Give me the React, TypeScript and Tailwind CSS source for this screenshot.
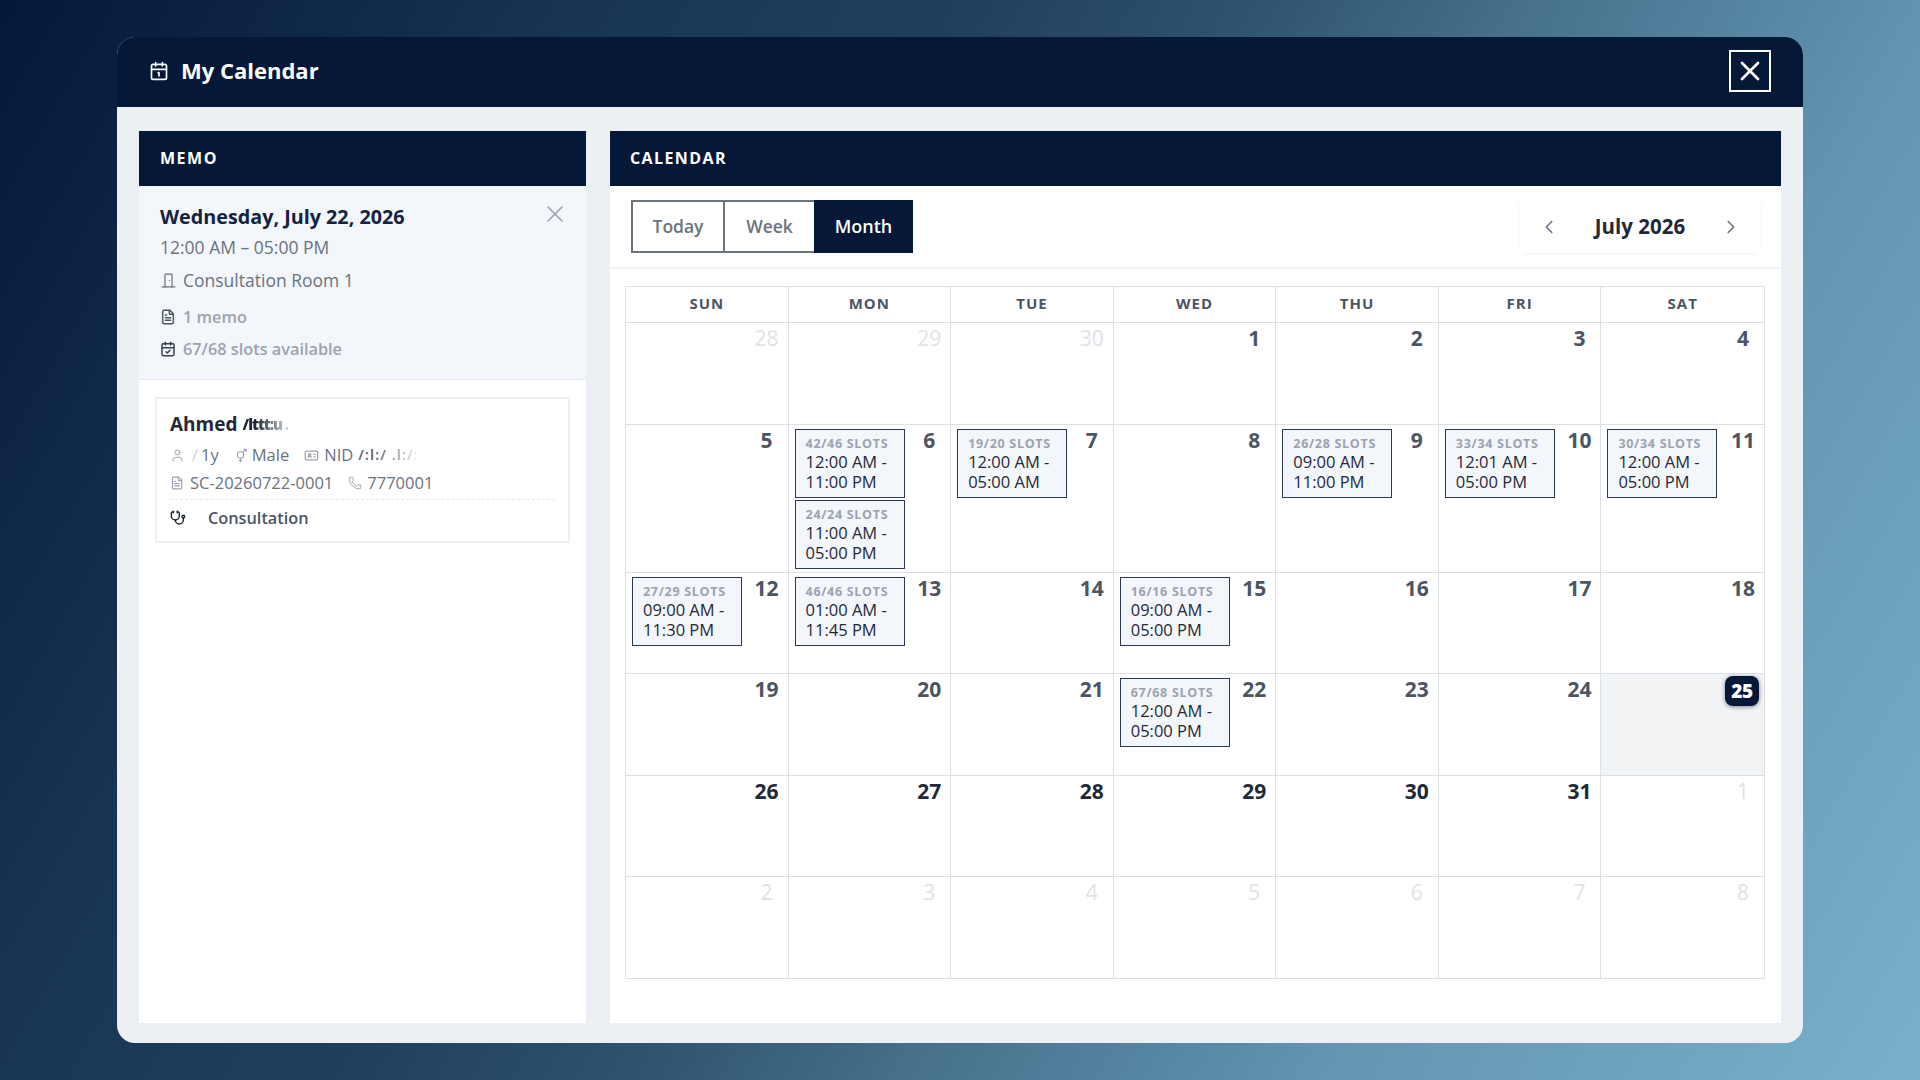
import React from 'react';
import { Stethoscope, X, ChevronLeft, ChevronRight, User, IdCard, Phone, FileText, CalendarCheck, VenusAndMars, Calendar1 } from 'lucide-react';

type Slot = { count: string; from: string; to: string };
type Day = { n: number; muted?: boolean; strong?: boolean; today?: boolean; slots?: Slot[] };

const heads = ['SUN', 'MON', 'TUE', 'WED', 'THU', 'FRI', 'SAT'];

const weeks: Day[][] = [
  [{ n: 28, muted: true }, { n: 29, muted: true }, { n: 30, muted: true }, { n: 1 }, { n: 2 }, { n: 3 }, { n: 4 }],
  [
    { n: 5 },
    { n: 6, slots: [{ count: '42/46', from: '12:00 AM', to: '11:00 PM' }, { count: '24/24', from: '11:00 AM', to: '05:00 PM' }] },
    { n: 7, slots: [{ count: '19/20', from: '12:00 AM', to: '05:00 AM' }] },
    { n: 8 },
    { n: 9, slots: [{ count: '26/28', from: '09:00 AM', to: '11:00 PM' }] },
    { n: 10, slots: [{ count: '33/34', from: '12:01 AM', to: '05:00 PM' }] },
    { n: 11, slots: [{ count: '30/34', from: '12:00 AM', to: '05:00 PM' }] },
  ],
  [
    { n: 12, slots: [{ count: '27/29', from: '09:00 AM', to: '11:30 PM' }] },
    { n: 13, slots: [{ count: '46/46', from: '01:00 AM', to: '11:45 PM' }] },
    { n: 14 },
    { n: 15, slots: [{ count: '16/16', from: '09:00 AM', to: '05:00 PM' }] },
    { n: 16 },
    { n: 17 },
    { n: 18 },
  ],
  [
    { n: 19 },
    { n: 20 },
    { n: 21 },
    { n: 22, slots: [{ count: '67/68', from: '12:00 AM', to: '05:00 PM' }] },
    { n: 23 },
    { n: 24 },
    { n: 25, today: true },
  ],
  [{ n: 26, strong: true }, { n: 27, strong: true }, { n: 28, strong: true }, { n: 29, strong: true }, { n: 30, strong: true }, { n: 31, strong: true }, { n: 1, muted: true }],
  [{ n: 2, muted: true }, { n: 3, muted: true }, { n: 4, muted: true }, { n: 5, muted: true }, { n: 6, muted: true }, { n: 7, muted: true }, { n: 8, muted: true }],
];

const rowHeights = ['h-[102px]', 'h-[148px]', 'h-[101px]', 'h-[102px]', 'h-[101px]', 'h-[101px]'];

function RoomIcon() {
  return (
    <svg viewBox="0 0 24 24" fill="none" stroke="currentColor" strokeWidth={1.7} strokeLinecap="round" strokeLinejoin="round" className="w-[17px] h-[17px]">
      <path d="M7 21V4a1 1 0 0 1 1-1h8a1 1 0 0 1 1 1v17" />
      <path d="M3 21h18" />
      <path d="M13.5 12h.01" />
    </svg>
  );
}

function SlotCard({ slot }: { slot: Slot }) {
  return (
    <div className="w-[110px] h-[69px] border-[1.5px] border-[#2b3a4f] bg-[#f3f6fb] pl-[10px] pt-[6px]">
      <div className="text-[12.5px] leading-[16px] font-bold tracking-[0.7px] text-[#9ca3af]">{slot.count} SLOTS</div>
      <div className="text-[16.5px] leading-[20px] font-medium text-[#1f2937]">{slot.from} -</div>
      <div className="text-[16.5px] leading-[20px] font-medium text-[#1f2937]">{slot.to}</div>
    </div>
  );
}

function DayCell({ day, last }: { day: Day; last: boolean }) {
  const color = day.muted ? 'text-[#dfe2e6] font-medium' : day.strong ? 'text-[#1f2937] font-bold' : 'text-[#4b5563] font-bold';
  return (
    <div className={`min-w-0 flex justify-between pl-[6px] pr-[5px] pt-[4px] ${last ? '' : 'border-r border-[#dcdfe3]'} ${day.today ? 'bg-[#f1f3f5]' : ''}`}>
      <div className="flex flex-col gap-[2px]">
        {day.slots?.map((s) => <SlotCard key={s.count} slot={s} />)}
      </div>
      {day.today ? (
        <div className="w-[34px] h-[30px] -mt-[2px] rounded-[8px] bg-[#051838] text-white text-[19px] leading-[30px] font-extrabold tracking-[-0.5px] text-center shadow-[0_1px_4px_rgba(5,24,56,0.5)]">{day.n}</div>
      ) : (
        <div className={`w-[34px] h-[30px] -mt-[4px] -mr-[1px] text-center text-[21px] leading-[30px] ${color}`}>{day.n}</div>
      )}
    </div>
  );
}

export default function App() {
  return (
    <div className="w-[1920px] h-[1080px] overflow-hidden bg-[linear-gradient(120deg,#04183a_0%,#1a3656_25%,#203f5e_38%,#2e5270_49%,#46708c_60%,#6295b0_76%,#7ab0cc_100%)] pt-[37px] pl-[117px] font-['Open_Sans',sans-serif]">
      <div className="w-[1686px] h-[1006px] rounded-[18px] overflow-hidden bg-[#ecf0f5] flex flex-col">
        <div className="h-[70px] shrink-0 bg-[#051838] flex items-center justify-between pl-[32px] pr-[32px] pb-[2px]">
          <div className="flex items-center gap-[12px]">
            <Calendar1 className="w-[20px] h-[20px] text-white" strokeWidth={2} />
            <div className="text-white text-[22px] font-bold -mt-[2px]">My Calendar</div>
          </div>
          <button className="w-[42px] h-[42px] border-2 border-white flex items-center justify-center">
            <X className="w-[32px] h-[32px] text-white shrink-0" strokeWidth={2} />
          </button>
        </div>

        <div className="flex-1 flex gap-[24px] pt-[24px] pb-[20px] pl-[22px] pr-[22px]">
          {/* Memo */}
          <div className="w-[447px] shrink-0 bg-white flex flex-col">
            <div className="h-[55px] bg-[#051838] flex items-center pl-[21px] pb-[2px] text-white text-[16px] font-bold tracking-[1.5px]">MEMO</div>
            <div className="relative h-[194px] bg-[#f3f6fb] border-b border-[#e5e7eb] pl-[21px] pt-[16px]">
              <X className="absolute top-[14px] right-[17px] w-[28px] h-[28px] text-[#9ca3af]" strokeWidth={1.4} />
              <div className="text-[19.75px] leading-[29px] font-bold text-[#142340]">Wednesday, July 22, 2026</div>
              <div className="text-[17.5px] leading-[24px] mt-[4px] font-medium text-[#6b7280]">12:00 AM – 05:00 PM</div>
              <div className="flex items-center gap-[6px] mt-[9px] text-[#6b7280]">
                <RoomIcon />
                <span className="text-[17.5px] leading-[24px] font-medium">Consultation Room 1</span>
              </div>
              <div className="flex items-center gap-[7px] mt-[13px] text-[#9ca3af]">
                <FileText className="w-[16px] h-[16px] text-[#4b5563]" strokeWidth={2.2} />
                <span className="text-[16.3px] leading-[24px] font-semibold">1 memo</span>
              </div>
              <div className="flex items-center gap-[7px] mt-[8px] text-[#9ca3af]">
                <CalendarCheck className="w-[16px] h-[16px] text-[#374151]" strokeWidth={2.2} />
                <span className="text-[16.3px] leading-[24px] font-semibold">67/68 slots available</span>
              </div>
            </div>
            <div className="pt-[17px] pl-[16px] pr-[16px]">
              <div className="h-[146px] border-2 border-[#eef0f3] pl-[13px] pr-[13px] pt-[11px]">
                <div className="flex items-center text-[19px] leading-[28px] font-bold text-[#1f2937]">
                  Ahmed
                  <span className="ml-[5px] text-[15px] font-extrabold tracking-[-1px] bg-[linear-gradient(90deg,#1f2937_30%,#d1d5db_100%)] bg-clip-text text-transparent">/lttt:u .</span>
                </div>
                <div className="flex items-center mt-[5px] text-[16.5px] leading-[24px] font-medium text-[#6b7280]">
                  <User className="w-[15px] h-[15px] text-[#9ca3af]" strokeWidth={1.6} />
                  <span className="ml-[7px] text-[#d1d5db]">/</span>
                  <span className="ml-[3px]">1y</span>
                  <VenusAndMars className="ml-[14px] w-[15px] h-[15px] text-[#9ca3af]" strokeWidth={1.8} />
                  <span className="ml-[4px]">Male</span>
                  <IdCard className="ml-[15px] w-[15px] h-[15px] text-[#9ca3af]" strokeWidth={2} />
                  <span className="ml-[5px]">NID</span>
                  <span className="ml-[5px] text-[14px] font-bold tracking-[1px] bg-[linear-gradient(90deg,#6b7280_30%,#f3f4f6_100%)] bg-clip-text text-transparent">/:l:/ .l:/:</span>
                </div>
                <div className="flex items-center mt-[4px] text-[16.5px] leading-[24px] font-medium text-[#6b7280]">
                  <FileText className="w-[14px] h-[14px] text-[#9ca3af]" strokeWidth={2} />
                  <span className="ml-[6px]">SC-20260722-0001</span>
                  <Phone className="ml-[15px] w-[14px] h-[14px] text-[#9ca3af]" strokeWidth={1.6} />
                  <span className="ml-[5px]">7770001</span>
                </div>
                <div className="flex items-center mt-[4px] pt-[6px] border-t border-dashed border-[#e5e7eb] text-[16.3px] leading-[24px] font-semibold text-[#4b5563]">
                  <Stethoscope className="w-[16px] h-[16px] text-[#1f2937]" strokeWidth={2.2} />
                  <span className="ml-[22px]">Consultation</span>
                </div>
              </div>
            </div>
          </div>

          {/* Calendar */}
          <div className="flex-1 min-w-0 bg-white flex flex-col">
            <div className="h-[55px] bg-[#051838] flex items-center pl-[20px] pb-[2px] text-white text-[16px] font-bold tracking-[1.4px]">CALENDAR</div>
            <div className="h-[83px] border-b-2 border-[#f1f3f6] flex items-center justify-between pl-[21px] pr-[21px]">
              <div className="flex h-[53px]">
                <div className="w-[94px] border-2 border-[#6b7280] flex items-center justify-center text-[17.5px] text-[#6b7280] font-semibold">Today</div>
                <div className="w-[90px] -ml-px border-2 border-l border-r-0 border-[#6b7280] flex items-center justify-center text-[17.5px] text-[#6b7280] font-semibold">Week</div>
                <div className="w-[99px] bg-[#051838] flex items-center justify-center text-[18px] text-white font-semibold">Month</div>
              </div>
              <div className="w-[240px] h-[53px] rounded-[6px] shadow-[0_1px_4px_rgba(0,0,0,0.06)] flex items-center justify-between px-[18px]">
                <ChevronLeft className="w-[22px] h-[22px] text-[#6b7280]" strokeWidth={1.8} />
                <div className="text-[20.5px] font-bold text-[#1f2937]">July 2026</div>
                <ChevronRight className="w-[22px] h-[22px] text-[#6b7280]" strokeWidth={1.8} />
              </div>
            </div>
            <div className="ml-[15px] mr-[16px] mt-[17px] border border-[#dcdfe3]">
              <div className="grid grid-cols-7 h-[36px] pb-[2px] border-b border-[#dcdfe3]">
                {heads.map((h, i) => (
                  <div key={h} className={`flex items-center justify-center text-[15px] font-bold tracking-[1px] text-[#4b5563] -mb-[2px] pb-[2px] ${i < 6 ? 'border-r border-[#dcdfe3]' : ''}`}>{h}</div>
                ))}
              </div>
              {weeks.map((w, i) => (
                <div key={i} className={`grid grid-cols-7 ${rowHeights[i]} ${i < 5 ? 'border-b border-[#dcdfe3]' : ''}`}>
                  {w.map((d, j) => <DayCell key={j} day={d} last={j === 6} />)}
                </div>
              ))}
            </div>
          </div>
        </div>
      </div>
    </div>
  );
}
